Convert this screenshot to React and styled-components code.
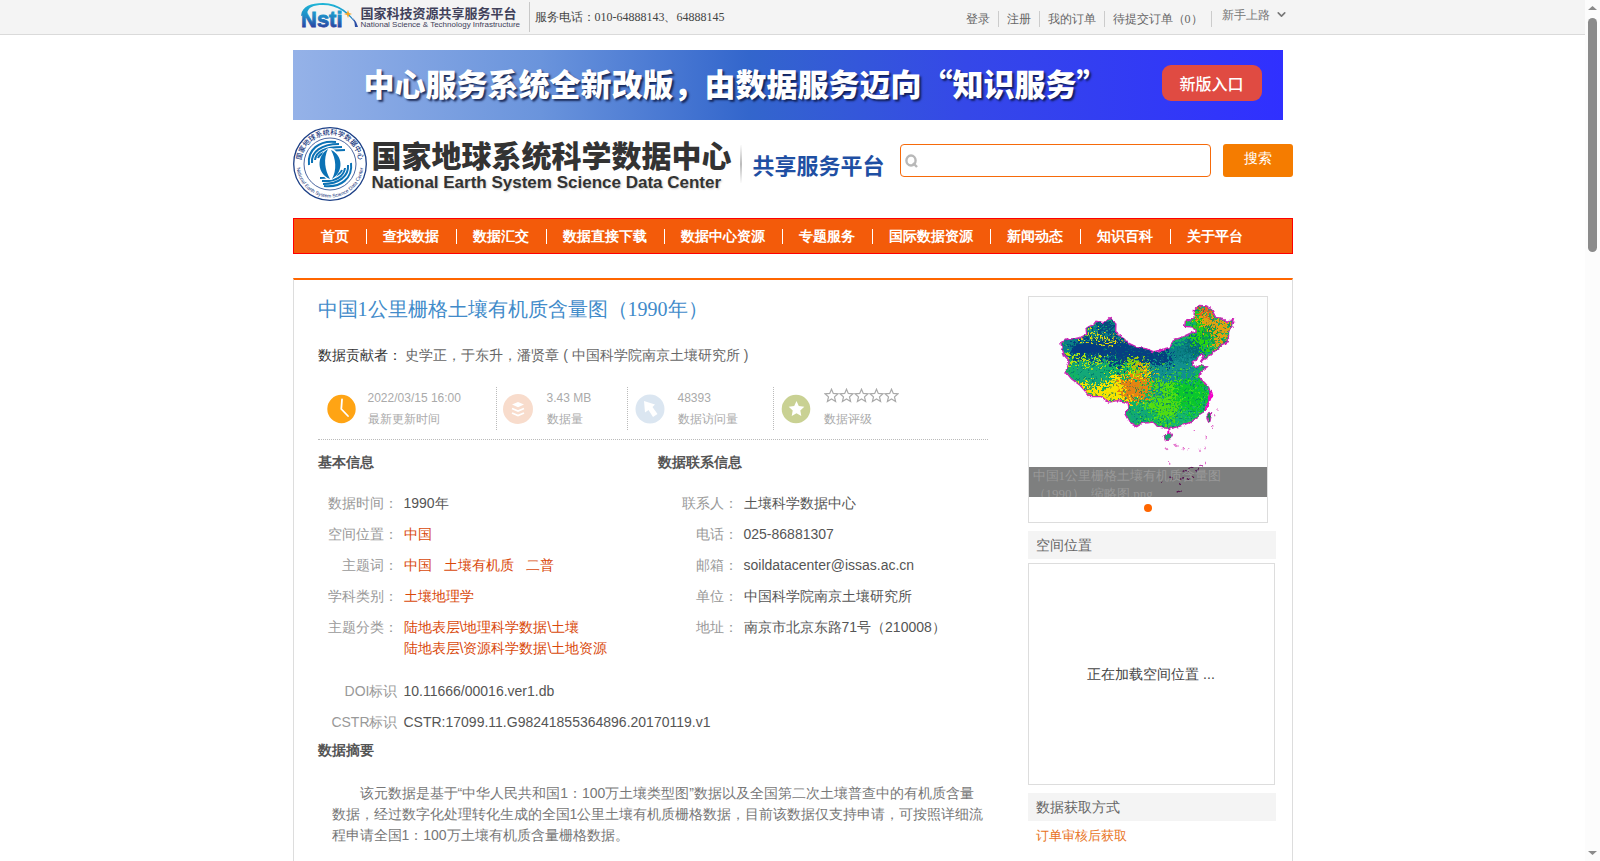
import React from 'react';
import styled, { createGlobalStyle } from 'styled-components';
import { ChevronDown } from 'lucide-react';

const sans = '"Liberation Sans", sans-serif';
const serif = '"Liberation Serif", serif';
const display = '"Noto Sans CJK SC", "Liberation Sans", sans-serif';

const GlobalStyle = createGlobalStyle`
  * {
    box-sizing: border-box;
  }
  body {
    margin: 0;
    background: #fff;
    color: #555;
    font-family: ${sans};
    font-size: 14px;
    line-height: 21px;
  }
  a {
    color: inherit;
    text-decoration: none;
  }
  h1, h2, p, ul, dl, dd {
    margin: 0;
    padding: 0;
  }
  ul {
    list-style: none;
  }
  svg {
    display: block;
    flex: none;
  }
`;

const Shell = styled.div`
  display: grid;
  grid-template-columns: minmax(0, 1fr) 15px;
  height: 100vh;
`;

const Page = styled.div`
  overflow-y: auto;
  scrollbar-width: none;
`;

const Container = styled.div`
  width: 100%;
  max-width: 1000px;
  margin: 0 auto;
`;

/* scroll bar */

const ScrollTrack = styled.div`
  display: flex;
  flex-direction: column;
  align-items: center;
  padding: 6px 0 5px;
  background: #fcfcfc;
`;

const ScrollThumb = styled.div`
  width: 9px;
  height: 27.5%;
  margin: 7px 0 auto;
  border-radius: 5px;
  background: #8b8b8b;
`;

/* top bar */

const TopBar = styled.header`
  background: #f4f4f4;
  border-bottom: 1px solid #dadada;
  font-family: ${serif};
  font-size: 12px;
  line-height: 16px;
`;

const TopInner = styled(Container)`
  display: flex;
  align-items: center;
  height: 34px;
  padding-left: 8px;
`;

const PlatformLink = styled.a`
  display: flex;
  align-items: center;
  gap: 3px;
  padding-right: 8px;
  border-right: 1px solid #c8c8c8;
  height: 30px;
`;

const PlatformName = styled.span`
  width: 160px;
  color: #41415a;
  font-family: ${display};
  font-size: 13px;
  font-weight: 700;
  line-height: 15px;
  white-space: nowrap;
`;

const PlatformNameEn = styled.small`
  display: block;
  font-family: "Liberation Sans", sans-serif;
  font-size: 8px;
  font-weight: 400;
  line-height: 10px;
`;

const Phone = styled.span`
  padding-left: 5px;
  color: #444;
`;

const TopLinks = styled.nav`
  display: flex;
  align-items: center;
  margin-left: auto;
  padding-right: 5px;
  color: #666;
`;

const TopLink = styled.a`
  padding: 0 8px;
  margin-top: 3px;
  border-right: 1px solid #ccc;
`;

const GuideButton = styled.button`
  display: flex;
  align-items: center;
  gap: 5px;
  margin: 0 0 5px;
  padding: 0 0 0 10px;
  border: 0;
  background: none;
  color: #777;
  font: inherit;
`;

/* banner and brand */

const Banner = styled.div`
  display: flex;
  align-items: center;
  justify-content: space-between;
  height: 70px;
  margin: 15px 10px 0 0;
  padding: 0 21px 4px 71px;
  background: linear-gradient(90deg, #95b2e8, #6a94dc 25%, #3366cc 46%, #3548e8 68%, #3030ff);
  color: #fff;
  font-family: ${display};
`;

const Slogan = styled.span`
  font-size: 31px;
  font-weight: 900;
  line-height: 40px;
  white-space: nowrap;
  text-shadow: 2px 2px 2px rgba(10, 20, 60, 0.8);
`;

const NewVersion = styled.a`
  width: 100px;
  border-radius: 9px;
  background: #e04b42;
  font-size: 16px;
  font-weight: 500;
  line-height: 36px;
  text-align: center;
`;

const Masthead = styled.div`
  display: flex;
  align-items: flex-start;
  padding: 7px 0 17px;
`;

const Brand = styled.a`
  display: flex;
  align-items: center;
  gap: 5px;
`;

const BrandName = styled.span`
  width: 361px;
  color: #333;
  font-family: ${display};
  font-size: 30px;
  font-weight: 900;
  line-height: 38px;
  white-space: nowrap;
`;

const BrandNameEn = styled.small`
  display: block;
  font-family: ${sans};
  font-size: 17px;
  font-weight: 700;
  line-height: 20px;
  text-shadow: 1px 1px 2px #ccc;
`;

const BrandTag = styled.span`
  margin-left: 2px;
  padding-left: 11px;
  border-left: 2px solid;
  border-image: linear-gradient(#fff, #bbb, #fff) 1;
  color: #1f4fa3;
  font-family: ${display};
  font-size: 22px;
  font-weight: 700;
  line-height: 38px;
  white-space: nowrap;
`;

const SearchForm = styled.form`
  display: flex;
  gap: 12px;
  flex: 1;
  margin: 17px 0 0 15px;
`;

const SearchBox = styled.label`
  display: flex;
  align-items: center;
  flex: 1;
  gap: 4px;
  height: 33px;
  padding: 0 5px 0 4px;
  border: 1px solid #f66a0a;
  border-radius: 4px;
`;

const SearchInput = styled.input`
  flex: 1;
  min-width: 0;
  border: 0;
  outline: 0;
  background: none;
  font: inherit;
`;

const SearchButton = styled.button`
  width: 70px;
  height: 33px;
  padding: 0 0 3px;
  border: 0;
  border-radius: 3px;
  background: #f57c00;
  color: #fff;
  font-family: ${sans};
  font-size: 14px;
`;

const NavBar = styled.nav`
  display: flex;
  align-items: center;
  height: 36px;
  padding-left: 11px;
  border: 1px solid #f00;
  background: #f35b0a;
  color: #fff;
  font-weight: 700;
  line-height: 15px;
`;

const NavLink = styled.a`
  padding: 0 17px 0 16px;

  & + & {
    border-left: 1px solid #fff;
  }
`;

/* dataset panel */

const Panel = styled.main`
  display: flex;
  align-items: flex-start;
  justify-content: space-between;
  min-height: 760px;
  margin-top: 24px;
  padding: 16px 16px 0 24px;
  border: 1px solid #ddd;
  border-top: 2px solid #f60;
`;

const Detail = styled.article`
  width: 670px;
`;

const Title = styled.h1`
  color: #428bca;
  font-family: ${serif};
  font-size: 20px;
  font-weight: 400;
  line-height: 26px;
`;

const Contributor = styled.p`
  margin-top: 23px;
  color: #666;

  b {
    color: #333;
    font-weight: 400;
  }
`;

const Stats = styled.ul`
  display: flex;
  padding: 21px 0 9px;
  border-bottom: 1px dotted #bbb;
  color: #aaa;
  font-size: 12px;
`;

const Stat = styled.li`
  display: flex;
  align-items: center;
  gap: ${({ $gap }) => $gap}px;
  width: ${({ $width }) => $width}px;
  height: 43px;
  padding-left: ${({ $pad }) => $pad}px;

  & + & {
    border-left: 1px dotted #bbb;
  }
`;

const Stars = styled.span`
  display: flex;
  height: 21px;
`;

const InfoColumns = styled.div`
  display: grid;
  grid-template-columns: 340px 1fr;
  margin-top: 12px;
`;

const SectionTitle = styled.h2`
  margin-top: ${({ $top }) => $top || 0}px;
  color: #555;
  font-size: 14px;
  font-weight: 700;
  line-height: 21px;
`;

const Facts = styled.dl`
  display: grid;
  grid-template-columns: 80px 1fr;
  gap: 10px 6px;
  margin-top: ${({ $top }) => $top}px;

  dt {
    color: #999;
    text-align: right;
  }
`;

const Keywords = styled.dd`
  display: flex;
  flex-direction: ${({ $stacked }) => ($stacked ? 'column' : 'row')};
  gap: ${({ $stacked }) => ($stacked ? 0 : 12)}px;
  color: #d9480a;
`;

const Abstract = styled.p`
  padding: 22px 0 40px 14px;
  color: #777;
  text-indent: 28px;
`;

/* sidebar */

const Sidebar = styled.aside`
  width: 248px;
`;

const Carousel = styled.div`
  width: 240px;
  padding-bottom: 10px;
  border: 1px solid #ddd;
`;

const Slide = styled.figure`
  position: relative;
  margin: 0;
`;

const Caption = styled.figcaption`
  position: absolute;
  inset: auto 0 0;
  height: 30px;
  padding: 0 44px 0 4px;
  overflow: hidden;
  background: rgba(0, 0, 0, 0.5);
  color: #999;
  font-family: ${serif};
  font-size: 13px;
  line-height: 18px;
`;

const Dot = styled.button`
  display: block;
  width: 8px;
  height: 8px;
  margin: 7px auto 0;
  padding: 0;
  border: 0;
  border-radius: 50%;
  background: #f60;
`;

const SideTitle = styled.h2`
  margin-top: 8px;
  padding-left: 8px;
  background: #f4f4f4;
  color: #666;
  font-size: 14px;
  font-weight: 400;
  line-height: 28px;
`;

const MapBox = styled.div`
  display: grid;
  place-items: center;
  height: 222px;
  margin: 4px 1px 0 0;
  border: 1px solid #ddd;
  color: #444;
`;

const AccessLink = styled.a`
  display: block;
  padding: 4px 8px;
  color: #e87322;
  font-size: 13px;
`;

const navItems = [
  '首页', '查找数据', '数据汇交', '数据直接下载', '数据中心资源',
  '专题服务', '国际数据资源', '新闻动态', '知识百科', '关于平台',
];

const contacts = [
  ['联系人：', '土壤科学数据中心'],
  ['电话：', '025-86881307'],
  ['邮箱：', 'soildatacenter@issas.ac.cn'],
  ['单位：', '中国科学院南京土壤研究所'],
  ['地址：', '南京市北京东路71号（210008）'],
];

const NstiLogo = () => (
  <svg width="57" height="30" viewBox="0 0 57 30">
    <defs>
      <linearGradient id="nsti" gradientUnits="userSpaceOnUse" x1="0" y1="2" x2="0" y2="26">
        <stop offset="0" stopColor="#1fb4d6" />
        <stop offset="0.5" stopColor="#1f8cc6" />
        <stop offset="1" stopColor="#2b3f9e" />
      </linearGradient>
    </defs>
    <path d="M0 14C1 4 10 1 22 1C38 1 50 11 57 25C48 11 36 3 22 3C12 3 7 5 6 12Z" fill="url(#nsti)" />
    <text x="0" y="25" fill="url(#nsti)" stroke="url(#nsti)" strokeWidth="0.8" fontFamily="Liberation Sans" fontSize="22" fontWeight="700">Nsti</text>
    <path d="M47 8l1 3 3 1-3 1-1 3-1-3-3-1 3-1Z" fill="#f5a623" />
    <path d="M52 16Q56 20 57 25H54Q54 20 52 16Z" fill="#2b4da5" />
  </svg>
);

const SearchIcon = () => (
  <svg width="14" height="14" viewBox="0 0 14 14">
    <ellipse cx="6" cy="6.500" rx="4.600" ry="5" fill="none" stroke="#b8b8b8" strokeWidth="2.400" />
    <path d="M8 9L12 13" stroke="#b8b8b8" strokeWidth="2.400" />
  </svg>
);

const Emblem = () => (
  <svg width="74" height="74" viewBox="0 0 74 74">
    <defs>
      <path id="arcTop" d="M9.500 46A29 29 0 1 1 64.500 46" />
      <path id="arcBottom" d="M3.870 32A33.500 33.500 0 1 0 70.130 32" />
    </defs>
    <circle cx="37" cy="37" r="36.300" fill="#fff" stroke="#1c3f86" strokeWidth="1.300" />
    <circle cx="37" cy="37" r="26" fill="none" stroke="#1c3f86" strokeWidth="0.800" />
    <text fill="#14347c" fontFamily="Noto Sans CJK SC" fontSize="7" fontWeight="500">
      <textPath href="#arcTop" startOffset="50%" textAnchor="middle">国家地球系统科学数据中心</textPath>
    </text>
    <text fill="#14347c" fontFamily="Liberation Sans" fontSize="5">
      <textPath href="#arcBottom" startOffset="50%" textAnchor="middle">National Earth System Science Data Center</textPath>
    </text>
    <g fill="none" stroke="#0b72b5" strokeWidth="2">
      <path d="M16 38C14 23 26 13 43 15" />
      <path d="M19 36C18 25 28 17 46 17" />
      <path d="M22 33C23 25 31 20 49 20" />
      <path d="M25 31C27 26 33 23 52 23" />
      <path d="M58 36C60 51 48 61 31 59" />
      <path d="M55 38C56 49 46 57 30 57" />
      <path d="M52 41C51 49 43 55 29 54" />
      <path d="M49 43C47 48 41 51 27 51" />
    </g>
    <ellipse cx="37" cy="37" rx="10" ry="16" fill="#fff" />
    <g fill="#0b72b5">
      <path d="M35 22C23 29 24 47 37 52C32 43 30 32 35 22Z" />
      <path d="M39 52C51 45 50 28 38 23C43 32 44 43 39 52Z" />
    </g>
  </svg>
);

const ClockIcon = () => (
  <svg width="30" height="30" viewBox="0 0 30 30">
    <circle cx="14.500" cy="15" r="14.200" fill="#ffa414" />
    <path d="M15 5.500L14.300 15L21 22" fill="none" stroke="#fff" strokeWidth="1.800" strokeLinecap="round" />
  </svg>
);

const LayersIcon = () => (
  <svg width="30" height="30" viewBox="0 0 30 30">
    <circle cx="15" cy="15" r="15" fill="#f8dccc" />
    <path d="M9 10.500L15 8l6 2.500-6 2.700Z" fill="#fff" />
    <path d="M9 14.500l6 2.500 6-2.500M9 19l6 2.500 6-2.500" fill="none" stroke="#fff" strokeWidth="1.800" />
  </svg>
);

const CursorIcon = () => (
  <svg width="30" height="30" viewBox="0 0 30 30">
    <circle cx="15" cy="15" r="14.500" fill="#dbe6f1" />
    <path d="M9 7L20 10.500L17.500 13L22.500 20L18 23L13.500 16L10 18.500Z" fill="#fff" />
  </svg>
);

const StarIcon = () => (
  <svg width="30" height="30" viewBox="0 0 30 30">
    <circle cx="15" cy="15" r="14.300" fill="#c9d193" />
    <path d="M15.500 7l2.300 5 5.500.7-4 3.800 1 5.500-4.800-2.700-4.800 2.700 1-5.500-4-3.800 5.500-.7Z" fill="#fff" />
  </svg>
);

const EmptyStar = () => (
  <svg width="15" height="15" viewBox="0 0 15 15">
    <path d="M7.500 1.200l1.800 4.200 4.700.4-3.500 3.100 1.100 4.600-4.100-2.500-4.100 2.500 1.100-4.600L1 5.800l4.700-.4Z" fill="none" stroke="#aaa" strokeWidth="1.200" />
  </svg>
);

const mainland = 'M152 186L172 178 208 174 230 163 228 143 250 135 258 124 281 128 297 113 318 129 317 158 343 174 357 190 382 202 408 206 430 215 460 210 480 205 489 180 516 171 540 160 556 153 548 141 524 139 526 124 552 117 553 90 568 76 590 78 607 92 617 112 638 115 650 127 673 117 668 136 656 152 655 185 640 190 624 206 608 218 588 236 571 245 583 228 574 221 560 239 547 247 558 262 574 255 592 260 572 275 566 290 584 308 596 322 602 338 596 362 586 386 565 412 540 427 510 438 480 446 444 441 430 426 396 430 380 440 360 430 344 400 357 386 354 367 322 362 296 366 274 350 240 350 210 316 184 296 168 276 178 243 164 228 157 208Z';
const hainan = 'M462 468L474 460 488 462 480 476 466 480Z';
const taiwan = 'M590 410L598 397 606 398 600 425 596 431Z';

const SoilMap = () => (
  <svg width="238" height="200" viewBox="57 51 714 600" role="img" aria-label="土壤有机质含量">
    <defs>
      <clipPath id="land"><path d={mainland} /></clipPath>
      <filter id="grain" x="-20%" y="-20%" width="140%" height="140%" colorInterpolationFilters="sRGB">
        <feTurbulence type="fractalNoise" baseFrequency="0.14" numOctaves="3" seed="7" result="noise" />
        <feDisplacementMap in="SourceGraphic" in2="noise" scale="95" xChannelSelector="R" yChannelSelector="G" />
      </filter>
      <filter id="specks" colorInterpolationFilters="sRGB">
        <feTurbulence type="fractalNoise" baseFrequency="0.16" numOctaves="2" seed="11" />
        <feColorMatrix values="0 0 0 0 0  0 0 0 0 0.450  0 0 0 0 0.420  9 0 0 0 -5.400" />
      </filter>
      <filter id="glints" colorInterpolationFilters="sRGB">
        <feTurbulence type="fractalNoise" baseFrequency="0.14" numOctaves="2" seed="23" />
        <feColorMatrix values="0 0 0 0 0.350  0 0 0 0 0.900  0 0 0 0 0.100  0 9 0 0 -5.600" />
      </filter>
      <filter id="edge" colorInterpolationFilters="sRGB">
        <feTurbulence type="fractalNoise" baseFrequency="0.08" numOctaves="2" seed="3" result="noise" />
        <feDisplacementMap in="SourceGraphic" in2="noise" scale="12" xChannelSelector="R" yChannelSelector="G" />
      </filter>
    </defs>
    <rect x="57" y="51" width="714" height="600" fill="#fdfefe" />
    <g filter="url(#edge)">
      <g clipPath="url(#land)">
        <rect x="140" y="60" width="550" height="400" fill="#12b463" />
        <g filter="url(#grain)">
          <path d="M150 170L320 100 440 210 560 170 600 200 540 300 440 310 380 250 150 235Z" fill="#0b7f87" />
          <path d="M390 240H560L570 290 480 310 410 290Z" fill="#12908f" />
          <path d="M180 190L240 180 330 170 480 215 480 255 370 245 320 265 290 230 190 230Z" fill="#063f82" />
          <path d="M250 125L315 120V160L270 160Z" fill="#064a80" />
          <path d="M540 175L600 165 590 205 530 230Z" fill="#066a76" />
          <path d="M150 190L170 232 290 240 300 248 170 250Z" fill="#b6e20c" />
          <path d="M215 155L285 170 350 185 280 184 215 170Z" fill="#e4d80a" />
          <path d="M180 250H275L300 300 270 318 210 306Z" fill="#13a878" />
          <path d="M335 235L400 240 420 275 380 290Z" fill="#8ad60b" />
          <path d="M200 305L290 320 300 285 350 290 420 270 410 350 350 375 230 355Z" fill="#f7e300" />
          <path d="M325 300L410 280 420 350 350 365Z" fill="#e58312" />
          <path d="M365 240L400 250 420 280 390 270Z" fill="#e3a00e" />
          <path d="M420 310L500 300 490 350 460 400 400 380 420 350Z" fill="#52dd10" />
          <path d="M425 325L460 330 450 360 420 355Z" fill="#129689" />
          <path d="M490 300L570 300 600 340 560 400 490 380Z" fill="#0ac72d" />
          <path d="M460 370L510 360 500 420 440 425Z" fill="#4fda12" />
          <path d="M350 390L410 385 410 425 360 425Z" fill="#12a57c" />
          <path d="M480 410L570 395 530 440 480 440Z" fill="#15b572" />
          <path d="M550 85L600 80 620 150 590 220 550 180Z" fill="#28d70c" />
          <path d="M560 110L600 100 620 125 660 120 640 205 610 200 620 160 590 150Z" fill="#e2a00f" />
          <path d="M550 75H610L600 105 560 105Z" fill="#e2651e" />
          <path d="M575 145L605 140 610 180 580 190Z" fill="#0ea04a" />
        </g>
        <rect x="140" y="60" width="550" height="400" filter="url(#specks)" opacity="0.700" />
        <rect x="400" y="270" width="220" height="190" filter="url(#glints)" opacity="0.800" />
        <ellipse cx="230" cy="208" rx="48" ry="14" fill="#053b83" />
      </g>
      <path d={mainland} fill="none" stroke="#d022b8" strokeWidth="4" />
      <path d={hainan} fill="#1aa56a" stroke="#d022b8" strokeWidth="3" />
      <path d={taiwan} fill="#128a4c" stroke="#d022b8" strokeWidth="3" />
      <path d="M478 446V460M600 335L604 348 594 372 584 392" fill="none" stroke="#f200c8" strokeWidth="6" />
      <g fill="none" stroke="#e36fcb" strokeWidth="4">
        <path d="M621 384v5M614 403v6M608 435v6M589 468v8M585 500v8M587 545v8M479 546v8M468 503l6 6M494 492l8 8M516 504l5 6M533 507h5M568 511h4M553 450v3" />
        <path d="M518 575l10-6 8 6M538 565l12-4M556 575l12-8M568 560l8-3M510 600l12-5M530 592l8 6M545 595l10-5M454 602v6M506 610l8 5M500 636l12-3M478 594l10 3" stroke="#b030a0" />
      </g>
    </g>
  </svg>
);

const App = () => {
  return (
    <Shell>
      <GlobalStyle />
      <Page>
        <TopBar>
          <TopInner>
            <PlatformLink href="#nsti">
              <NstiLogo />
              <PlatformName>
                国家科技资源共享服务平台
                <PlatformNameEn>National Science &amp; Technology Infrastructure</PlatformNameEn>
              </PlatformName>
            </PlatformLink>
            <Phone>服务电话：010-64888143、64888145</Phone>
            <TopLinks>
              <TopLink href="#login">登录</TopLink>
              <TopLink href="#register">注册</TopLink>
              <TopLink href="#orders">我的订单</TopLink>
              <TopLink href="#pending">待提交订单（0）</TopLink>
              <GuideButton type="button">
                新手上路
                <ChevronDown size={13} strokeWidth={3} />
              </GuideButton>
            </TopLinks>
          </TopInner>
        </TopBar>

        <Container>
          <Banner>
            <Slogan>中心服务系统全新改版，由数据服务迈向“知识服务”</Slogan>
            <NewVersion href="#new">新版入口</NewVersion>
          </Banner>

          <Masthead>
            <Brand href="#home">
              <Emblem />
              <BrandName>
                国家地球系统科学数据中心
                <BrandNameEn>National Earth System Science Data Center</BrandNameEn>
              </BrandName>
              <BrandTag>共享服务平台</BrandTag>
            </Brand>
            <SearchForm>
              <SearchBox>
                <SearchIcon />
                <SearchInput type="text" aria-label="搜索" />
              </SearchBox>
              <SearchButton type="button">搜索</SearchButton>
            </SearchForm>
          </Masthead>

          <NavBar>
            {navItems.map((item) => (
              <NavLink key={item} href="#nav">{item}</NavLink>
            ))}
          </NavBar>

          <Panel>
            <Detail>
              <Title>中国1公里栅格土壤有机质含量图（1990年）</Title>
              <Contributor>
                <b>数据贡献者：</b> 史学正，于东升，潘贤章 ( 中国科学院南京土壤研究所 )
              </Contributor>

              <Stats>
                <Stat $pad={9} $gap={11} $width={178}>
                  <ClockIcon />
                  <div>2022/03/15 16:00<br />最新更新时间</div>
                </Stat>
                <Stat $pad={6} $gap={14} $width={131}>
                  <LayersIcon />
                  <div>3.43 MB<br />数据量</div>
                </Stat>
                <Stat $pad={7} $gap={13} $width={146}>
                  <CursorIcon />
                  <div>48393<br />数据访问量</div>
                </Stat>
                <Stat $pad={7} $gap={13} $width={215}>
                  <StarIcon />
                  <div>
                    <Stars>
                      {[1, 2, 3, 4, 5].map((n) => <EmptyStar key={n} />)}
                    </Stars>
                    数据评级
                  </div>
                </Stat>
              </Stats>

              <InfoColumns>
                <section>
                  <SectionTitle>基本信息</SectionTitle>
                  <Facts $top={20}>
                    <dt>数据时间：</dt>
                    <dd>1990年</dd>
                    <dt>空间位置：</dt>
                    <Keywords><a href="#china">中国</a></Keywords>
                    <dt>主题词：</dt>
                    <Keywords>
                      <a href="#china">中国</a>
                      <a href="#som">土壤有机质</a>
                      <a href="#survey">二普</a>
                    </Keywords>
                    <dt>学科类别：</dt>
                    <Keywords><a href="#pedology">土壤地理学</a></Keywords>
                    <dt>主题分类：</dt>
                    <Keywords $stacked>
                      <a href="#soil">陆地表层\地理科学数据\土壤</a>
                      <a href="#land">陆地表层\资源科学数据\土地资源</a>
                    </Keywords>
                  </Facts>
                </section>
                <section>
                  <SectionTitle>数据联系信息</SectionTitle>
                  <Facts $top={20}>
                    {contacts.map(([label, value]) => (
                      <React.Fragment key={label}>
                        <dt>{label}</dt>
                        <dd>{value}</dd>
                      </React.Fragment>
                    ))}
                  </Facts>
                </section>
              </InfoColumns>

              <Facts $top={22}>
                <dt>DOI标识</dt>
                <dd>10.11666/00016.ver1.db</dd>
                <dt>CSTR标识</dt>
                <dd>CSTR:17099.11.G98241855364896.20170119.v1</dd>
              </Facts>

              <SectionTitle $top={7}>数据摘要</SectionTitle>
              <Abstract>
                该元数据是基于“中华人民共和国1：100万土壤类型图”数据以及全国第二次土壤普查中的有机质含量数据，经过数字化处理转化生成的全国1公里土壤有机质栅格数据，目前该数据仅支持申请，可按照详细流程申请全国1：100万土壤有机质含量栅格数据。
              </Abstract>
            </Detail>

            <Sidebar>
              <Carousel>
                <Slide>
                  <SoilMap />
                  <Caption>中国1公里栅格土壤有机质含量图（1990）_缩略图.png</Caption>
                </Slide>
                <Dot type="button" aria-label="1" />
              </Carousel>
              <SideTitle>空间位置</SideTitle>
              <MapBox>正在加载空间位置 ...</MapBox>
              <SideTitle>数据获取方式</SideTitle>
              <AccessLink href="#access">订单审核后获取</AccessLink>
            </Sidebar>
          </Panel>
        </Container>
      </Page>

      <ScrollTrack aria-hidden="true">
        <svg width="9" height="5" viewBox="0 0 9 5"><path d="M4.500 0L9 4H0Z" fill="#8b8b8b" /></svg>
        <ScrollThumb />
        <svg width="9" height="5" viewBox="0 0 9 5"><path d="M0 0H9L4.500 4Z" fill="#8b8b8b" /></svg>
      </ScrollTrack>
    </Shell>
  );
};

export default App;
